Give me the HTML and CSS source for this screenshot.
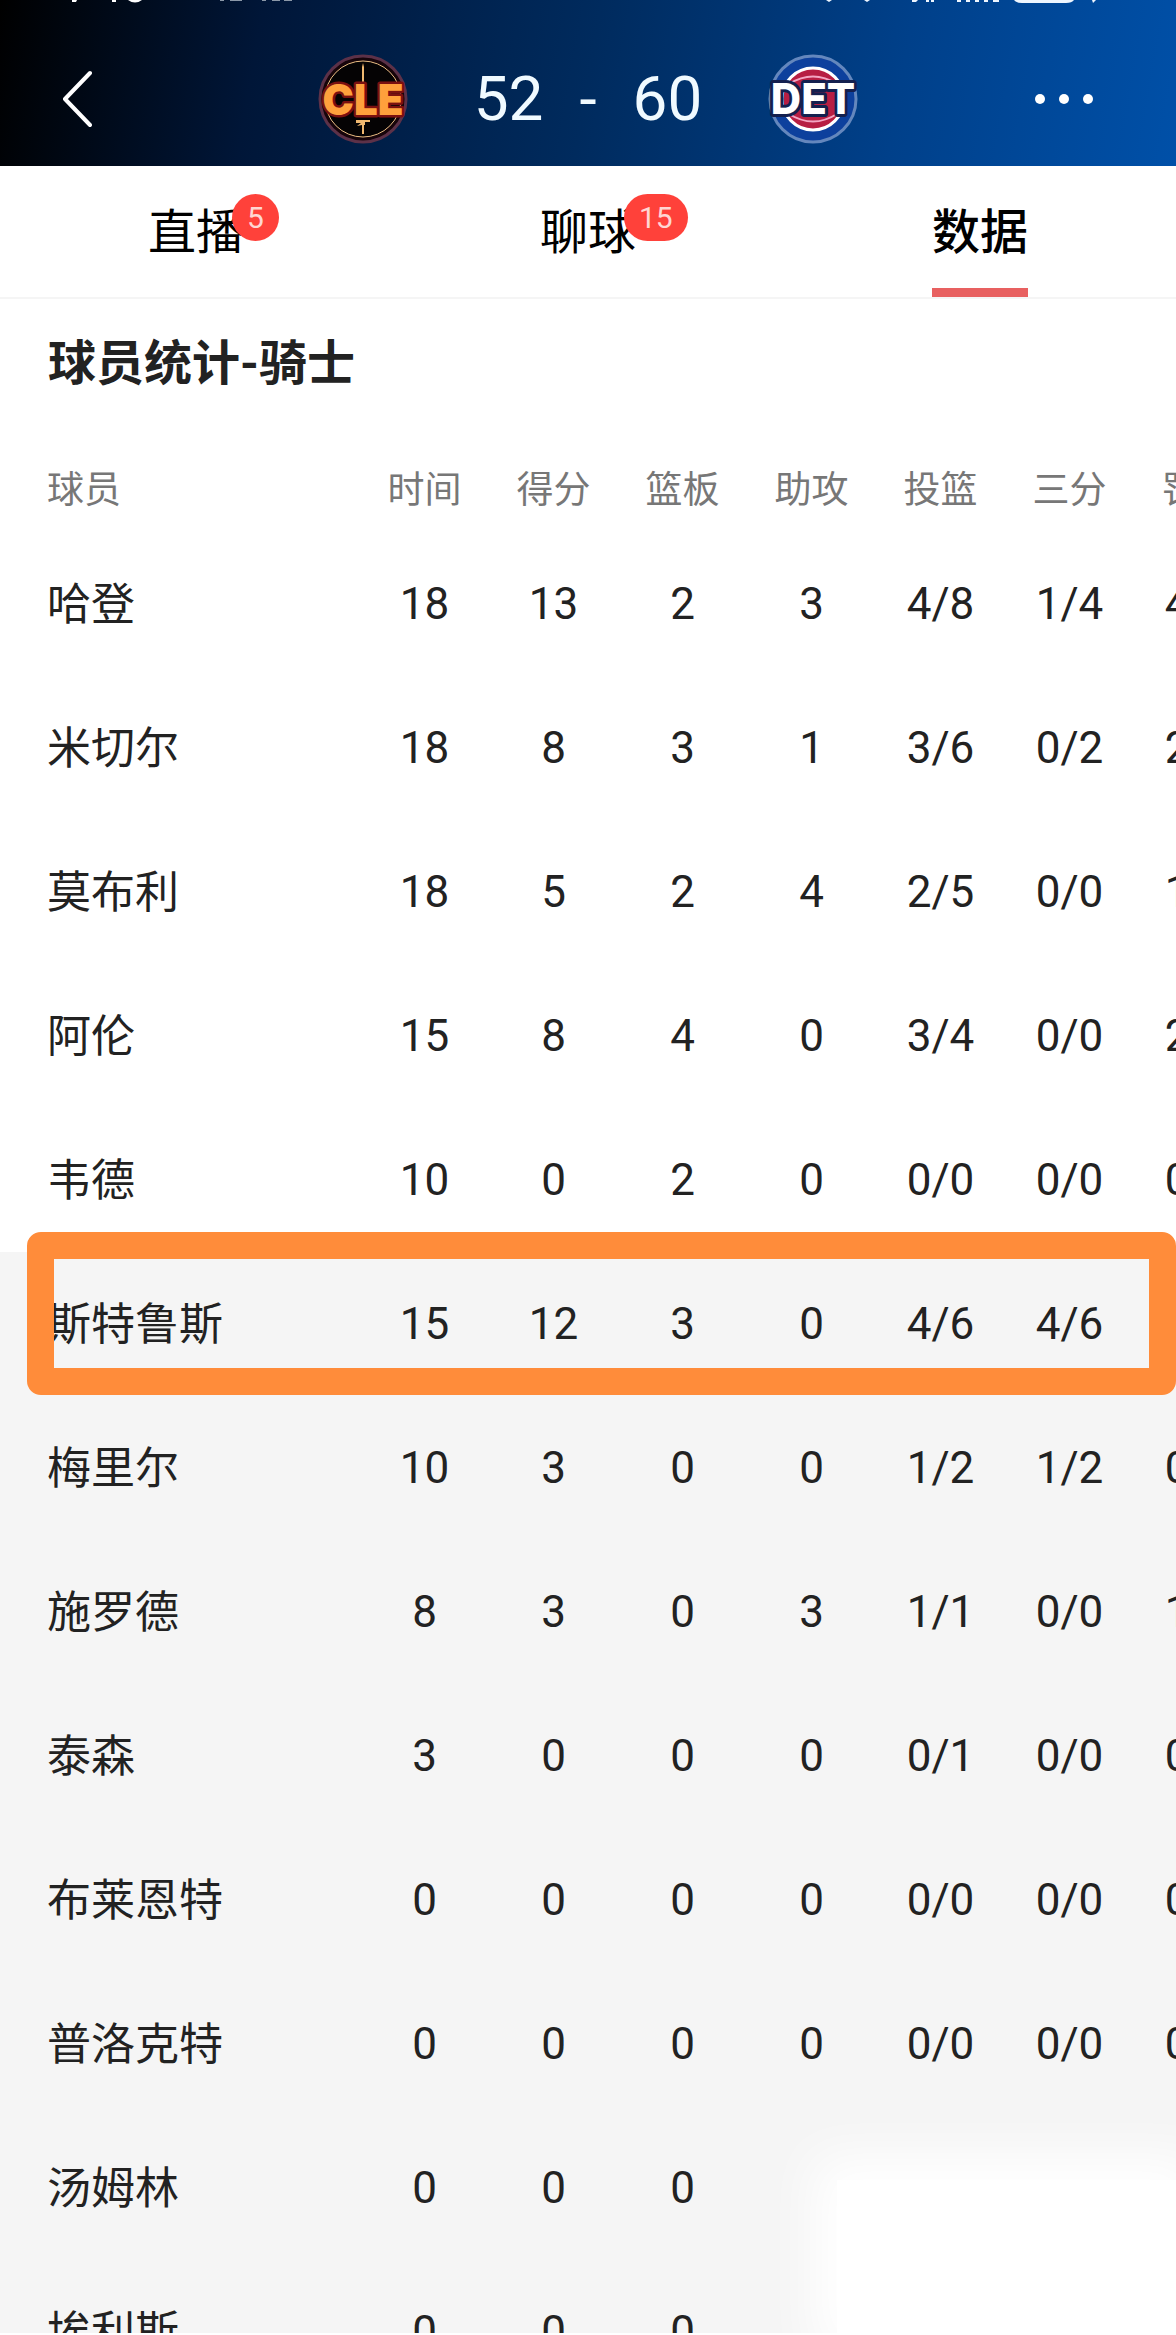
FILE: index.html
```
<!DOCTYPE html>
<html lang="zh-CN">
<head>
	<meta charset="utf-8">
	<meta name="viewport" content="width=device-width, initial-scale=1">
	<title>球员统计</title>
	<link rel="stylesheet" href="styles.css">
</head>
<body>
	<div id="page">
		<header id="header">
			<!-- 状态栏 -->
			<svg class="status" viewBox="0 0 1176 4" preserveAspectRatio="none" aria-hidden="true">
				<path d="M72 0h5l-1 2h-4zM112 0h4v2h-4zM128 0h14q-7 5-14 0z" fill="#fff"/>
				<path d="M220 0h4v1h-4zM230 0h12v1h-12zM262 0h4v1h-4zM272 0h8v1h-8zM284 0h8v1h-8z" fill="#8b98a8"/>
				<path d="M826 0h6l-3 2zM864 0h6l-3 2zM912 0h6l-2 2h-4zM926 0h3v2h-3zM931 0h3v2h-3zM957 0h4v2h-4zM966 0h4v2h-4zM975 0h4v2h-4zM984 0h4v2h-4zM993 0h6v2h-6zM1014 0h60q-2 3-8 3h-44q-6 0-8-3zM1092 0h4l-3 3z" fill="#eef6ff"/>
			</svg>
			<div class="bar">
				<button class="back" type="button" aria-label="返回">
					<svg width="32" height="64" viewBox="0 0 32 64"><path d="M30 6L5 32L30 58" fill="none" stroke="#fff" stroke-width="4" stroke-linecap="round" stroke-linejoin="round"/></svg>
				</button>
				<div class="match">
					<svg class="logo" viewBox="0 0 90 90" role="img" aria-label="CLE">
						<circle cx="45" cy="45" r="43" fill="#16040a" stroke="#5c3148" stroke-width="3"/>
						<circle cx="45" cy="45" r="38" fill="#050304" stroke="#e9bd83" stroke-width="1"/>
						<path d="M45 9l1 4v16h-2V13zM38 66h14v2h-5v3h-1v9h-2v-9l-5 1 4-3h-5z" fill="#f0b870"/>
						<text class="logo-text cle" x="45" y="61" text-anchor="middle">CLE</text>
					</svg>
					<p class="score"><span>52</span><span>-</span><span>60</span></p>
					<svg class="logo" viewBox="0 0 90 90" role="img" aria-label="DET">
						<circle cx="45" cy="45" r="43" fill="#0d409d" stroke="#6487bd" stroke-width="3"/>
						<circle cx="45" cy="45" r="31" fill="#b71e43" stroke="#fff" stroke-width="3"/>
						<path d="M21 30Q45 15 69 30M21 60Q45 75 69 60" fill="none" stroke="#f3a5c2" stroke-width="2"/>
						<text class="logo-text det" x="45" y="60" text-anchor="middle">DET</text>
					</svg>
				</div>
				<button class="more" type="button" aria-label="更多">
					<svg width="60" height="12" viewBox="0 0 60 12" fill="#fff"><circle cx="6" cy="6" r="5"/><circle cx="30" cy="6" r="5"/><circle cx="54" cy="6" r="5"/></svg>
				</button>
			</div>
		</header>

		<nav id="tabs">
			<a href="#live"><span class="label">直播<i class="badge">5</i></span></a>
			<a href="#chat"><span class="label">聊球<i class="badge">15</i></span></a>
			<a href="#stats" class="on"><span class="label">数据</span></a>
		</nav>

		<main id="stats">
			<h1>球员统计-骑士</h1>
			<table>
				<thead>
					<tr><th>球员</th><th>时间</th><th>得分</th><th>篮板</th><th>助攻</th><th>投篮</th><th>三分</th><th>罚球</th></tr>
				</thead>
				<tbody>
					<tr><td>哈登</td><td>18</td><td>13</td><td>2</td><td>3</td><td>4/8</td><td>1/4</td><td>4/4</td></tr>
					<tr><td>米切尔</td><td>18</td><td>8</td><td>3</td><td>1</td><td>3/6</td><td>0/2</td><td>2/2</td></tr>
					<tr><td>莫布利</td><td>18</td><td>5</td><td>2</td><td>4</td><td>2/5</td><td>0/0</td><td>1/2</td></tr>
					<tr><td>阿伦</td><td>15</td><td>8</td><td>4</td><td>0</td><td>3/4</td><td>0/0</td><td>2/2</td></tr>
					<tr><td>韦德</td><td>10</td><td>0</td><td>2</td><td>0</td><td>0/0</td><td>0/0</td><td>0/0</td></tr>
				</tbody>
				<tbody class="bench">
					<tr class="mark"><td>斯特鲁斯</td><td>15</td><td>12</td><td>3</td><td>0</td><td>4/6</td><td>4/6</td><td></td></tr>
					<tr><td>梅里尔</td><td>10</td><td>3</td><td>0</td><td>0</td><td>1/2</td><td>1/2</td><td>0/0</td></tr>
					<tr><td>施罗德</td><td>8</td><td>3</td><td>0</td><td>3</td><td>1/1</td><td>0/0</td><td>1/2</td></tr>
					<tr><td>泰森</td><td>3</td><td>0</td><td>0</td><td>0</td><td>0/1</td><td>0/0</td><td>0/0</td></tr>
					<tr><td>布莱恩特</td><td>0</td><td>0</td><td>0</td><td>0</td><td>0/0</td><td>0/0</td><td>0/0</td></tr>
					<tr><td>普洛克特</td><td>0</td><td>0</td><td>0</td><td>0</td><td>0/0</td><td>0/0</td><td>0/0</td></tr>
					<tr><td>汤姆林</td><td>0</td><td>0</td><td>0</td><td></td><td></td><td></td><td></td></tr>
					<tr><td>埃利斯</td><td>0</td><td>0</td><td>0</td><td></td><td></td><td></td><td></td></tr>
				</tbody>
			</table>
		</main>
		<div id="cover"></div>
	</div>
</body>
</html>
```
FILE: styles.css
```
*, *::after{
	margin: 0;
	padding: 0;
	box-sizing: border-box;
}
body{
	font-family: Roboto, "Noto Sans CJK SC", sans-serif;
	color: #222;
	background: #fff;
}
#page{
	position: relative;
	height: 100vh;
	overflow: hidden;
	border-bottom: 2px solid #fff;
}

/* 顶部比分 */
#header{
	height: 166px;
	background: linear-gradient(100deg, #000 0%, #001638 22%, #002b5e 50%, #00408a 76%, #0050a8 100%);
}
.status{
	display: block;
	width: 100%;
	height: 4px;
}
.bar{
	display: grid;
	grid-template-columns: 1fr auto 1fr;
	align-items: center;
	height: 162px;
	padding: 28px 60px 0;
}
button{
	border: 0;
	background: none;
	cursor: pointer;
}
button svg{
	display: block;
}
.back, .more{
	width: 60px;
}
.more{
	justify-self: end;
	margin-right: 22px;
}
.match{
	display: flex;
	align-items: center;
	gap: 66px;
}
.logo{
	width: 90px;
	height: 90px;
	overflow: visible;
}
.logo-text{
	font-family: Inter, sans-serif;
	font-weight: 900;
	font-size: 42px;
	paint-order: stroke;
	stroke-linejoin: round;
}
.cle{
	fill: #ffa03c;
	stroke: #7a1010;
	stroke-width: 5px;
}
.det{
	font-weight: 800;
	fill: #fff;
	stroke: #14204f;
	stroke-width: 6px;
}
.score{
	display: flex;
	gap: 36px;
	color: #f0faff;
	font-size: 62px;
	line-height: 72px;
}

/* 选项卡 */
#tabs{
	display: flex;
	height: 133px;
	border-bottom: 2px solid #f5f5f5;
}
#tabs a{
	flex: 1;
	display: flex;
	justify-content: center;
	color: #000;
	font-size: 48px;
	line-height: 122px;
	text-decoration: none;
}
.label{
	position: relative;
	padding-top: 6px;
}
.on .label{
	padding-top: 6px;
	font-weight: 500;
	box-shadow: inset 0 -9px #e86060;
}
.badge{
	position: absolute;
	left: calc(100% - 12px);
	top: 28px;
	min-width: 47px;
	height: 47px;
	padding: 0 15px;
	border-radius: 24px;
	background: #ff413a;
	color: #ffd6d3;
	font-size: 30px;
	font-style: normal;
	line-height: 47px;
	text-align: center;
}

/* 数据表 */
#stats{
	overflow-x: auto;
	overflow-y: hidden;
	scrollbar-width: none;
}
h1{
	padding: 29px 48px 0;
	font-size: 48px;
	line-height: 72px;
}
table{
	width: 1263px;
	margin-top: 44px;
	table-layout: fixed;
	border-collapse: collapse;
}
th, td{
	font-weight: 400;
	text-align: center;
}
th{
	width: 129px;
	height: 88px;
	padding-bottom: 2px;
	color: #777;
	font-size: 37px;
}
td{
	height: 144px;
	font-size: 44px;
}
th:first-child, td:first-child{
	width: 360px;
	padding-left: 47px;
	text-align: left;
}
td:first-child{
	padding-bottom: 6px;
}
.bench{
	background: #f5f5f5;
}
.mark{
	position: relative;
}
.mark::after{
	content: "";
	position: absolute;
	left: 27px;
	top: -20px;
	width: calc(100vw - 27px);
	height: 163px;
	border: 27px solid #ff8c3a;
	border-radius: 14px;
}

#cover{
	position: absolute;
	right: 0;
	bottom: 0;
	width: 339px;
	height: 153px;
	background: #fff;
	box-shadow: 0 0 48px 24px #fff;
}
```
